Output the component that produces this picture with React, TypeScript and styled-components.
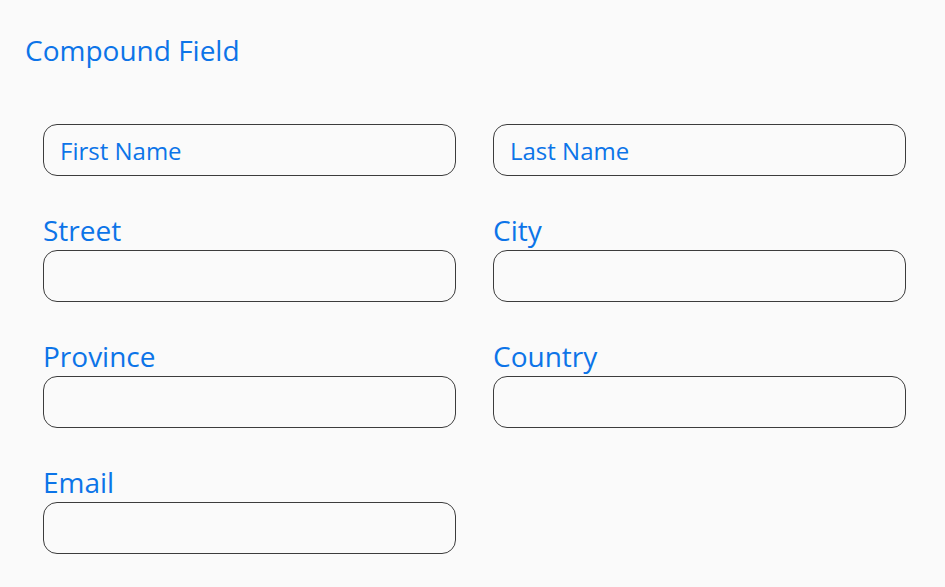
import React from "react";
import styled, { createGlobalStyle } from "styled-components";

const GlobalStyle = createGlobalStyle`
	html, body {
		margin: 0;
		padding: 0;
		background: #fafafa;
		font-family: "Open Sans", "Noto Sans", sans-serif;
	}
`;

const BLUE = "#0c74e8";

const Page = styled.main`
	padding: 31px 0 0 25px;
`;

const Title = styled.h1`
	margin: 0;
	font-size: 28px;
	font-weight: 400;
	line-height: 38px;
	color: ${BLUE};
`;

const Grid = styled.div`
	display: grid;
	grid-template-columns: 413px 413px;
	column-gap: 37px;
	row-gap: 40px;
	margin: 55px 0 0 18px;
`;

const Field = styled.div`
	display: flex;
	flex-direction: column;
`;

const Label = styled.label`
	font-size: 28px;
	line-height: 28px;
	color: ${BLUE};
	margin-bottom: 6px;
`;

const Input = styled.input`
	box-sizing: border-box;
	width: 413px;
	height: 52px;
	border: 1px solid #3c3c3c;
	border-radius: 14px;
	background: transparent;
	padding: 0 16px;
	font-family: inherit;
	font-size: 24px;
	color: ${BLUE};
	outline: none;

	&::placeholder {
		color: ${BLUE};
		opacity: 1;
	}
`;

const fields = ["Street", "City", "Province", "Country", "Email"];

function App() {
	return (
		<Page>
			<GlobalStyle />
			<Title>Compound Field</Title>
			<Grid>
				<Input placeholder="First Name" />
				<Input placeholder="Last Name" />
				{fields.map((name) => (
					<Field key={name}>
						<Label>{name}</Label>
						<Input />
					</Field>
				))}
			</Grid>
		</Page>
	);
}

export default App;
